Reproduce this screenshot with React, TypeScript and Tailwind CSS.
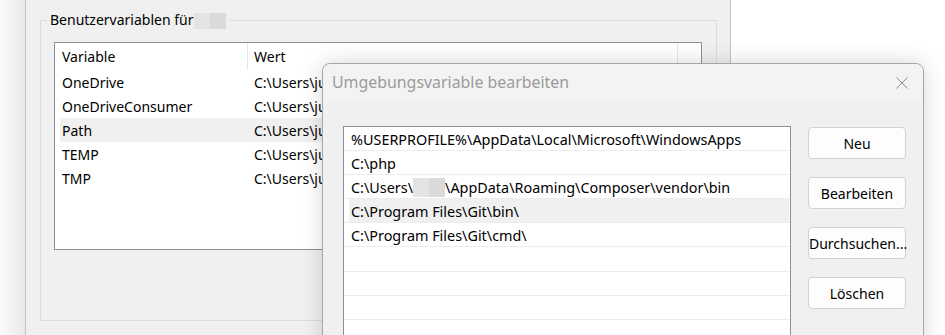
import React from "react";

const userVars = [
  { name: "OneDrive", value: "C:\\Users\\julian\\OneDrive" },
  { name: "OneDriveConsumer", value: "C:\\Users\\julian\\OneDrive" },
  { name: "Path", value: "C:\\Users\\julian\\AppData\\Local", selected: true },
  { name: "TEMP", value: "C:\\Users\\julian\\AppData\\Local\\Temp" },
  { name: "TMP", value: "C:\\Users\\julian\\AppData\\Local\\Temp" },
];

const paths = [
  "%USERPROFILE%\\AppData\\Local\\Microsoft\\WindowsApps",
  "C:\\php",
  "composer",
  "C:\\Program Files\\Git\\bin\\",
  "C:\\Program Files\\Git\\cmd\\",
  "",
  "",
  "",
  "",
];

const buttons = ["Neu", "Bearbeiten", "Durchsuchen...", "Löschen"];

function Redacted({ className }: { className: string }) {
  return (
    <span className={`inline-flex align-middle ${className}`}>
      <span className="h-full w-1/2 bg-[#e4e4e4]" />
      <span className="h-full w-1/2 bg-[#dadada]" />
    </span>
  );
}

export default function App() {
  return (
    <div
      className="relative flex w-[945px] h-[335px] overflow-hidden bg-white text-black"
      style={{ fontFamily: '"Noto Sans", "Open Sans", sans-serif' }}
    >
      <div className="w-[25px] shrink-0 bg-gradient-to-r from-[#fbfbfb] to-[#e9e9e9]" />

      {/* background window */}
      <div className="w-[706px] shrink-0 border-x border-[#c2c2c2] bg-[#f0f0f0] pl-[14px] pt-[10px]">
        <fieldset className="w-[677px] h-[311px] border border-[#dcdcdc]">
          <legend className="ml-[6px] px-[3px] text-[14px] leading-[20px]">
            Benutzervariablen für <Redacted className="w-[32px] h-[16px] -ml-[3px]" />
          </legend>
          <div className="pl-[13px] pt-[12px]">
            <div className="w-[648px] h-[208px] border border-[#8c8f98] bg-white text-[14px]">
              <div className="flex h-[27px] items-center">
                <div className="w-[193px] h-full flex items-center pl-[7px] border-r border-[#e5e5e5]">Variable</div>
                <div className="w-[430px] h-full flex items-center pl-[6px] border-r border-[#e5e5e5]">Wert</div>
              </div>
              {userVars.map((v) => (
                <div
                  key={v.name}
                  className={`flex h-[24px] items-center ml-[5px] ${v.selected ? "bg-[#f0f0f0]" : ""}`}
                >
                  <div className="w-[188px] pl-[2px] whitespace-nowrap">{v.name}</div>
                  <div className="pl-[6px] whitespace-nowrap">{v.value}</div>
                </div>
              ))}
            </div>
          </div>
        </fieldset>
      </div>

      <div className="flex-1 bg-white" />

      {/* edit dialog */}
      <div className="absolute left-[322px] top-[63px] w-[602px] h-[290px] rounded-t-[8px] border border-[#a6a6a6] bg-[#f0f0f0] shadow-[0_0_22px_rgba(0,0,0,0.16)]">
        <div className="flex h-[38px] items-center justify-between rounded-t-[8px] bg-[#f3f3f3] pl-[9px] pr-[14px]">
          <span className="text-[15.9px] text-[#9b9b9b]">Umgebungsvariable bearbeiten</span>
          <svg width="14" height="14" viewBox="0 0 14 14" fill="none" stroke="#8a8a8a" strokeWidth="1">
            <path d="M1.5 1.5l11 11M12.5 1.5l-11 11" />
          </svg>
        </div>
        <div className="flex pl-[20px] pt-[24px]">
          <div className="w-[448px] h-[240px] border border-[#8c8f98] bg-white text-[14.4px]">
            {paths.map((p, i) => (
              <div key={i} className="h-[24.1px] border-b border-[#ededed] flex">
                <div
                  className={`flex-1 mx-[5px] flex items-center pl-[2px] pt-[2px] whitespace-nowrap ${i === 3 ? "bg-[#f0f0f0] mr-[1px]" : ""}`}
                >
                  {p === "composer" ? (
                    <>
                      C:\Users\
                      <Redacted className="w-[32px] h-[19px]" />
                      \AppData\Roaming\Composer\vendor\bin
                    </>
                  ) : (
                    p
                  )}
                </div>
              </div>
            ))}
          </div>
          <div className="ml-[17px] flex flex-col gap-[18px] pt-[1px]">
            {buttons.map((b) => (
              <button
                key={b}
                className="w-[98px] h-[32px] rounded-[4px] border border-[#d2d2d2] bg-[#fdfdfd] text-[14px] whitespace-nowrap"
              >
                {b}
              </button>
            ))}
          </div>
        </div>
      </div>
    </div>
  );
}
